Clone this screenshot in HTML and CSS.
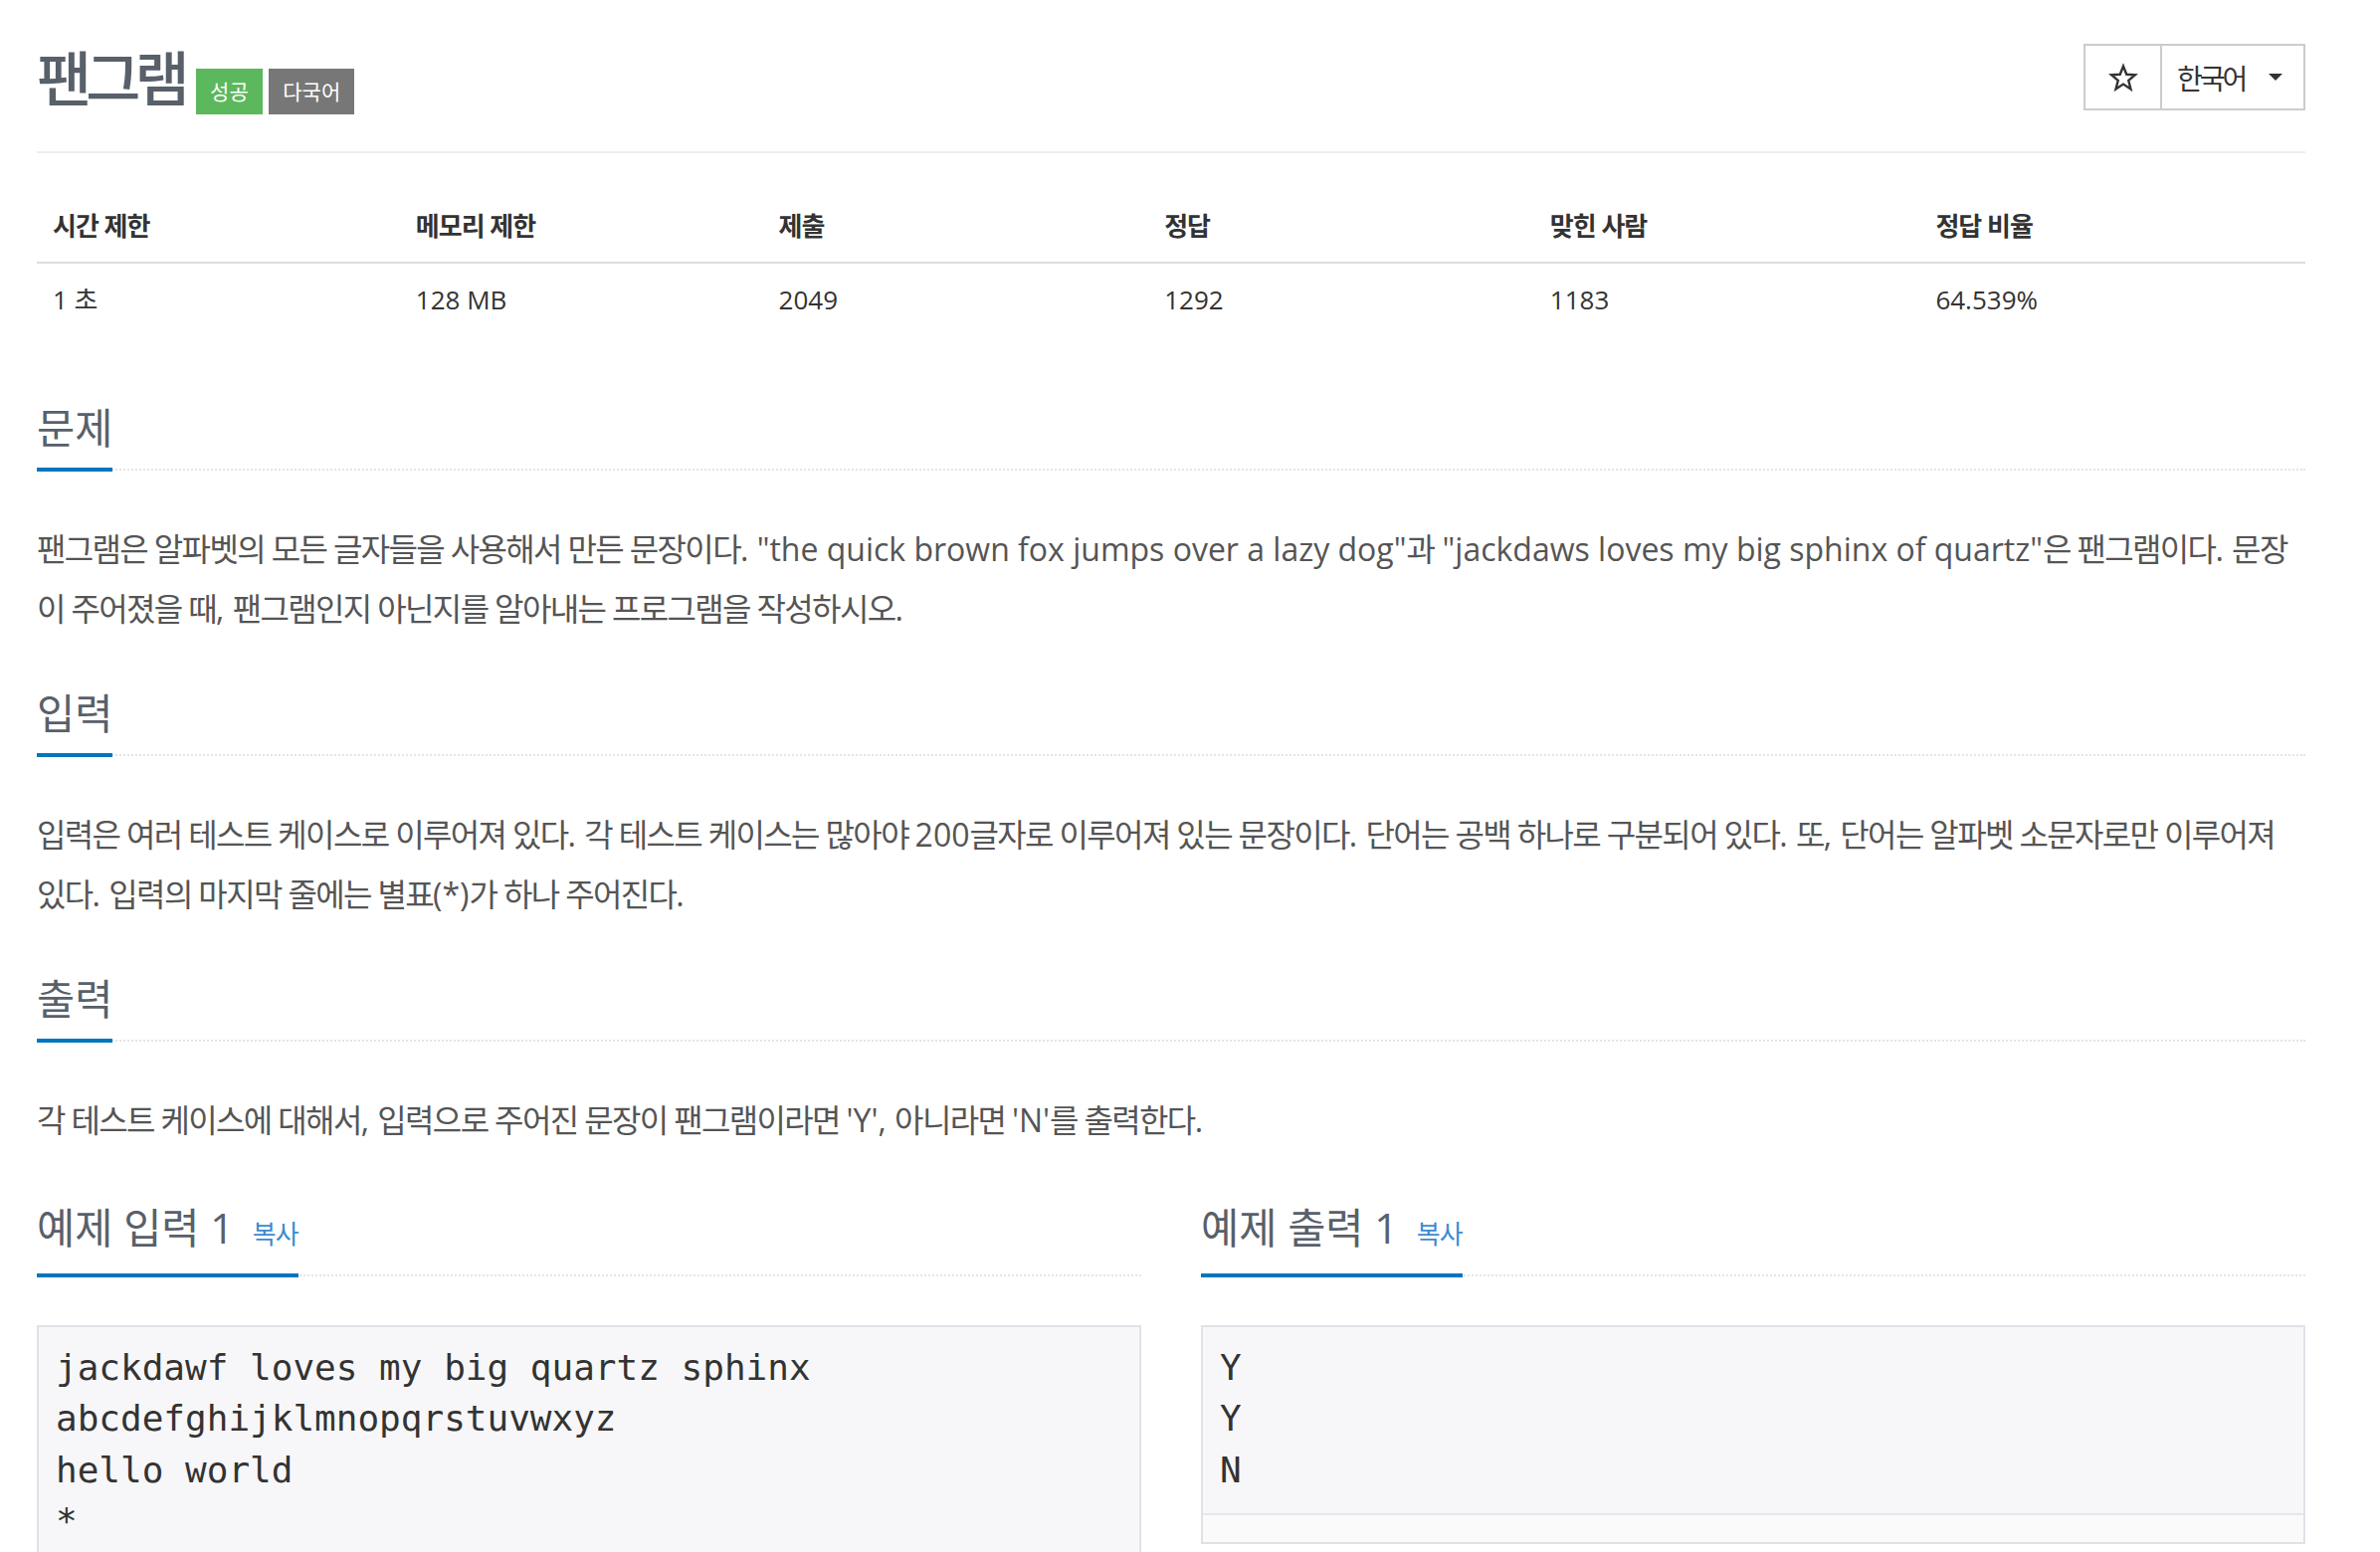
FILE: index.html
```html
<!DOCTYPE html>
<html lang="ko">
<head>
<meta charset="utf-8">
<title>팬그램</title>
<link rel="stylesheet" href="styles.css">
</head>
<body>
<div class="container">
  <div class="page-header">
    <div class="title-wrap">
      <h1 class="title">팬그램</h1>
      <span class="label label-success">성공</span>
      <span class="label label-default">다국어</span>
    </div>
    <div class="btn-group">
      <button class="btn btn-star" type="button">
        <svg class="star" viewBox="0 0 24 24" width="30" height="30"><path d="M12 2.8l2.6 6.6 7 .4-5.4 4.5 1.8 6.9L12 17.3l-6 3.9 1.8-6.9L2.4 9.8l7-.4z" fill="none" stroke="#333" stroke-width="1.9" stroke-linejoin="miter"/></svg>
      </button>
      <button class="btn btn-lang" type="button"><span class="ko">한국어</span><span class="caret"></span></button>
    </div>
  </div>

  <table class="info">
    <colgroup><col class="c16"><col class="c16"><col class="c17"><col class="c17"><col class="c17"><col class="c17"></colgroup>
    <thead>
      <tr><th>시간 제한</th><th>메모리 제한</th><th>제출</th><th>정답</th><th>맞힌 사람</th><th>정답 비율</th></tr>
    </thead>
    <tbody>
      <tr><td>1 초</td><td>128 MB</td><td>2049</td><td>1292</td><td>1183</td><td>64.539%</td></tr>
    </tbody>
  </table>

  <section class="section first">
    <div class="headline"><h2>문제</h2></div>
    <p class="text"><span class="ko">팬그램은 알파벳의 모든 글자들을 사용해서 만든 문장이다</span>. "the quick brown fox jumps over a lazy dog"<span class="ko">과</span> "jackdaws loves my big sphinx of quartz"<span class="ko">은 팬그램이다</span>. <span class="ko">문장이 주어졌을 때</span>, <span class="ko">팬그램인지 아닌지를 알아내는 프로그램을 작성하시오</span>.</p>
  </section>

  <section class="section">
    <div class="headline"><h2>입력</h2></div>
    <p class="text"><span class="ko">입력은 여러 테스트 케이스로 이루어져 있다</span>. <span class="ko">각 테스트 케이스는 많아야 </span>200<span class="ko">글자로 이루어져 있는 문장이다</span>. <span class="ko">단어는 공백 하나로 구분되어 있다</span>. <span class="ko">또</span>, <span class="ko">단어는 알파벳 소문자로만 이루어져 있다</span>. <span class="ko">입력의 마지막 줄에는 별표</span>(*)<span class="ko">가 하나 주어진다</span>.</p>
  </section>

  <section class="section">
    <div class="headline"><h2>출력</h2></div>
    <p class="text"><span class="ko">각 테스트 케이스에 대해서</span>, <span class="ko">입력으로 주어진 문장이 팬그램이라면 </span>'Y', <span class="ko">아니라면 </span>'N'<span class="ko">를 출력한다</span>.</p>
  </section>

  <div class="samples">
    <div class="sample">
      <div class="headline"><h2>예제 입력 1 <a class="copy" href="#">복사</a></h2></div>
      <pre class="sampledata">jackdawf loves my big quartz sphinx
abcdefghijklmnopqrstuvwxyz
hello world
*</pre>
    </div>
    <div class="sample">
      <div class="headline"><h2>예제 출력 1 <a class="copy" href="#">복사</a></h2></div>
      <div class="sample-box">
        <pre class="sampledata out">Y
Y
N</pre>
        <div class="scroll-track"></div>
      </div>
    </div>
  </div>
</div>
</body>
</html>
```

FILE: styles.css
```css
html, body {
  margin: 0;
  padding: 0;
  background: #fff;
}
body {
  font-family: "Open Sans", "Noto Sans CJK KR", sans-serif;
  color: #333;
}
.container {
  width: 2280px;
  margin-left: 37px;
}
.ko {
  letter-spacing: -1.65px;
}

/* header */
.page-header {
  display: flex;
  justify-content: space-between;
  align-items: flex-start;
  padding-top: 44px;
  height: 108px;
  border-bottom: 2px solid #eee;
}
.title-wrap {
  display: flex;
  align-items: flex-start;
}
.title {
  margin: 4px 0 0 0;
  font-size: 60px;
  line-height: 62px;
  font-weight: 500;
  color: #58606a;
  letter-spacing: -6px;
}
.label {
  display: block;
  margin-top: 25px;
  height: 46px;
  line-height: 46px;
  padding: 0 14.5px;
  font-size: 21px;
  color: #fff;
}
.label-success {
  background: #5cb85c;
  margin-left: 12px;
}
.label-default {
  background: #777;
  margin-left: 6px;
  padding: 0 14px;
}
.btn-group {
  display: flex;
  border: 2px solid #ccc;
  height: 63px;
}
.btn {
  background: #fff;
  border: 0;
  margin: 0;
  padding: 0;
  font-family: inherit;
  color: #333;
  display: flex;
  align-items: center;
}
.btn-star {
  width: 77px;
  justify-content: center;
  border-right: 2px solid #ccc;
}
.btn-lang {
  width: 142px;
  padding-left: 15px;
  font-size: 28px;
}
.btn-lang .ko {
  letter-spacing: -3px;
}
.caret {
  margin-left: 24px;
  width: 0;
  height: 0;
  border-top: 7px solid #333;
  border-left: 7.5px solid transparent;
  border-right: 7.5px solid transparent;
}

/* info table */
.info {
  width: 100%;
  table-layout: fixed;
  border-collapse: collapse;
  margin-top: 37px;
  font-size: 26px;
  color: #333;
}
.c16 { width: 16%; }
.c17 { width: 17%; }
.info th, .info td {
  text-align: left;
  padding: 16px;
  line-height: 40px;
}
.info th {
  font-weight: 700;
  border-bottom: 2px solid #ddd;
  letter-spacing: -1px;
}

/* sections */
.section {
  margin-top: 53px;
}
.section.first {
  margin-top: 71px;
}
.headline {
  border-bottom: 2px dotted #e4e4e4;
}
.headline h2 {
  display: inline-block;
  margin: 0 0 -3px 0;
  padding-bottom: 18px;
  border-bottom: 4px solid #0076c0;
  font-size: 41.5px;
  line-height: 44px;
  font-weight: 400;
  color: #58606a;
}
.text {
  margin: 49px 0 0 0;
  font-size: 32px;
  line-height: 60px;
  color: #555;
}

/* samples */
.samples {
  display: grid;
  grid-template-columns: 1fr 1fr;
  column-gap: 60px;
  margin-top: 56px;
}
.copy {
  font-size: 26px;
  color: #3b8bd0;
  text-decoration: none;
  letter-spacing: -1px;
  margin-left: 8px;
}
.sampledata {
  margin: 49px 0 0 0;
  padding: 15px 17px 22px;
  background: #f7f7f9;
  border: 2px solid #e1e1e8;
  font-family: "DejaVu Sans Mono", monospace;
  font-size: 36px;
  line-height: 51.4px;
  color: #333;
  white-space: pre;
}
.sample-box {
  margin-top: 49px;
  border: 2px solid #e1e1e8;
  background: #f7f7f9;
}
.sample-box .sampledata.out {
  margin: 0;
  border: 0;
  padding: 15px 17px 18px;
}
.scroll-track {
  height: 27px;
  border-top: 2px solid #e6e6ea;
  background: #fafafa;
}
```
